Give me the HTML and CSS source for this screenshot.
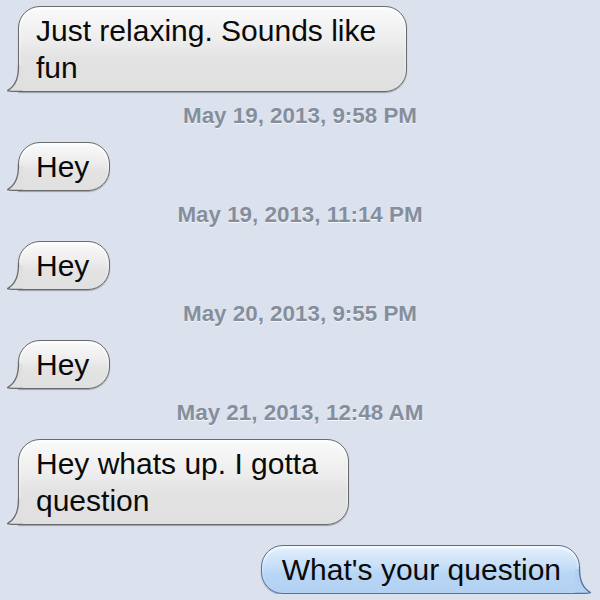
FILE: index.html
```html
<!DOCTYPE html>
<html lang="en">
<head>
    <meta charset="UTF-8">
    <meta name="viewport" content="width=device-width, initial-scale=1.0">
    <title>Messages</title>
    <link rel="stylesheet" href="styles.css">
</head>
<body>
    <div class="thread">
        <div class="bubble in wrap">Just relaxing. Sounds like<br>fun<svg class="tail" width="30" height="30" viewBox="0 0 30 30"><path class="tail-fill" d="M11 5 C11 18 7 25 0.5 28.6 C5 29.8 10 29.5 16 29.5 L16 5 Z"/><path class="tail-line" d="M11.5 3 L11.5 5 C11.5 18 7 25 0.5 28.6 C5 29.8 10 29.5 16 29.5"/></svg></div>
        <div class="stamp">May 19, 2013, 9:58 PM</div>

        <div class="bubble in">Hey<svg class="tail" width="30" height="30" viewBox="0 0 30 30"><path class="tail-fill" d="M11 5 C11 18 7 25 0.5 28.6 C5 29.8 10 29.5 16 29.5 L16 5 Z"/><path class="tail-line" d="M11.5 3 L11.5 5 C11.5 18 7 25 0.5 28.6 C5 29.8 10 29.5 16 29.5"/></svg></div>
        <div class="stamp">May 19, 2013, 11:14 PM</div>

        <div class="bubble in">Hey<svg class="tail" width="30" height="30" viewBox="0 0 30 30"><path class="tail-fill" d="M11 5 C11 18 7 25 0.5 28.6 C5 29.8 10 29.5 16 29.5 L16 5 Z"/><path class="tail-line" d="M11.5 3 L11.5 5 C11.5 18 7 25 0.5 28.6 C5 29.8 10 29.5 16 29.5"/></svg></div>
        <div class="stamp">May 20, 2013, 9:55 PM</div>

        <div class="bubble in">Hey<svg class="tail" width="30" height="30" viewBox="0 0 30 30"><path class="tail-fill" d="M11 5 C11 18 7 25 0.5 28.6 C5 29.8 10 29.5 16 29.5 L16 5 Z"/><path class="tail-line" d="M11.5 3 L11.5 5 C11.5 18 7 25 0.5 28.6 C5 29.8 10 29.5 16 29.5"/></svg></div>
        <div class="stamp">May 21, 2013, 12:48 AM</div>

        <div class="bubble in wrap">Hey whats up. I gotta<br>question<svg class="tail" width="30" height="30" viewBox="0 0 30 30"><path class="tail-fill" d="M11 5 C11 18 7 25 0.5 28.6 C5 29.8 10 29.5 16 29.5 L16 5 Z"/><path class="tail-line" d="M11.5 3 L11.5 5 C11.5 18 7 25 0.5 28.6 C5 29.8 10 29.5 16 29.5"/></svg></div>

        <div class="bubble out">What's your question<svg class="tail" width="30" height="30" viewBox="0 0 30 30"><path class="tail-fill" d="M11 5 C11 18 7 25 0.5 28.6 C5 29.8 10 29.5 16 29.5 L16 5 Z"/><path class="tail-line" d="M11.5 3 L11.5 5 C11.5 18 7 25 0.5 28.6 C5 29.8 10 29.5 16 29.5"/></svg></div>
    </div>
</body>
</html>
```

FILE: styles.css
```css
body {
    margin: 0;
    padding: 0;
    background-color: #dbe2ed;
    font-family: "Liberation Sans", Arial, sans-serif;
    overflow: hidden;
}

.thread {
    display: flex;
    flex-direction: column;
    padding-top: 6px;
}

.bubble {
    position: relative;
    font-size: 30px;
    line-height: 37px;
    color: #0a0a0a;
    padding: 5px 20px 5px 17px;
    border: 1px solid #6a6a6a;
    border-radius: 22px;
    white-space: nowrap;
}

.bubble + .bubble {
    margin-top: 20px;
}

.bubble.in {
    align-self: flex-start;
    margin-left: 18px;
    border-bottom-left-radius: 0;
    background: linear-gradient(#fafafa 0%, #ededed 40%, #e3e3e3 60%, #e0e0e0 100%);
    box-shadow: 0 1px 1px rgba(0, 0, 0, 0.3), inset 0 2px 3px rgba(255, 255, 255, 0.9);
}

.bubble.wrap {
    padding-right: 30px;
}

.bubble.out {
    align-self: flex-end;
    margin-right: 20px;
    padding: 5px 18px 5px 20px;
    border-color: #52729c;
    border-bottom-right-radius: 0;
    background: linear-gradient(#e2f0fd 0%, #c9e0f8 40%, #b7d5f4 60%, #b3d2f3 100%);
    box-shadow: 0 1px 1px rgba(0, 0, 0, 0.3), inset 0 2px 3px rgba(255, 255, 255, 0.8);
}

.tail {
    position: absolute;
    left: -12px;
    bottom: -1px;
    display: block;
}

.bubble.out .tail {
    left: auto;
    right: -12px;
    transform: scaleX(-1);
}

.tail-line {
    fill: none;
    stroke: #6a6a6a;
    stroke-width: 1.3;
    stroke-linejoin: round;
}

.bubble.in .tail-fill {
    fill: #e0e0e0;
}

.bubble.out .tail-fill {
    fill: #b3d2f3;
}

.bubble.out .tail-line {
    stroke: #52729c;
}

.stamp {
    margin: 11px 0 13px;
    text-align: center;
    font-size: 22.4px;
    font-weight: bold;
    line-height: 26px;
    color: #858e9d;
    text-shadow: 0 1px 0 rgba(255, 255, 255, 0.7);
}
```
